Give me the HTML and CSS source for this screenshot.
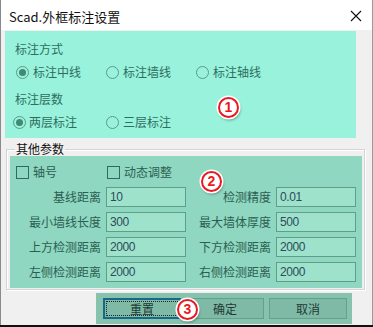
FILE: index.html
```html
<!DOCTYPE html>
<html lang="zh">
<head>
    <meta charset="UTF-8">
    <title>Scad.外框标注设置</title>
    <link rel="stylesheet" href="styles.css">
</head>
<body>
    <div class="window">
        <div class="titlebar">
            <span class="title">Scad.外框标注设置</span>
            <svg class="close" width="12" height="12" viewBox="0 0 12 12">
                <path d="M1 1 L11 11 M11 1 L1 11" stroke="#111" stroke-width="1.1" fill="none"/>
            </svg>
        </div>

        <div class="client">
            <div class="mode-panel">
                <div class="caption">标注方式</div>
                <div class="radio-row">
                    <label class="radio checked"><span class="ring"></span>标注中线</label>
                    <label class="radio"><span class="ring"></span>标注墙线</label>
                    <label class="radio"><span class="ring"></span>标注轴线</label>
                </div>
                <div class="caption">标注层数</div>
                <div class="radio-row">
                    <label class="radio checked first-left"><span class="ring"></span>两层标注</label>
                    <label class="radio"><span class="ring"></span>三层标注</label>
                </div>
            </div>

            <fieldset class="group">
                <legend>其他参数</legend>
                <div class="group-fill">
                    <div class="check-row">
                        <label class="check"><span class="box"></span>轴号</label>
                        <label class="check"><span class="box"></span>动态调整</label>
                    </div>
                    <div class="param-grid">
                        <span class="param-label">基线距离</span><span class="field">10</span>
                        <span class="param-label">检测精度</span><span class="field">0.01</span>
                        <span class="param-label">最小墙线长度</span><span class="field">300</span>
                        <span class="param-label">最大墙体厚度</span><span class="field">500</span>
                        <span class="param-label">上方检测距离</span><span class="field">2000</span>
                        <span class="param-label">下方检测距离</span><span class="field">2000</span>
                        <span class="param-label">左侧检测距离</span><span class="field">2000</span>
                        <span class="param-label">右侧检测距离</span><span class="field">2000</span>
                    </div>
                </div>
            </fieldset>

            <div class="button-bar">
                <button class="btn default">重置</button>
                <button class="btn">确定</button>
                <button class="btn">取消</button>
            </div>

            <span class="badge badge-1">1</span>
            <span class="badge badge-2">2</span>
            <span class="badge badge-3">3</span>
        </div>
    </div>
</body>
</html>
```

FILE: styles.css
```css
body {
    margin: 0;
    background-color: #111;
    font-family: "Noto Sans CJK SC", "Liberation Sans", sans-serif;
    font-size: 12px;
}

.window {
    width: 371px;
    height: 325px;
    border-left: 1px solid #8a8a8a;
    border-right: 1px solid #9a9a9a;
    background-color: #f0f0f0;
}

.titlebar {
    height: 30px;
    background-color: white;
    display: flex;
    align-items: center;
    justify-content: space-between;
    padding: 0 10px 0 8px;
}

.title {
    font-size: 13px;
    color: #111;
    padding-top: 2px;
}

.close {
    margin-top: 2px;
}

.client {
    position: relative;
    height: 295px;
}

.mode-panel {
    margin: 1px 0 0 4px;
    width: 351px;
    height: 107px;
    padding-left: 10px;
    box-sizing: border-box;
    background-color: #99f2dc;
    color: #2d6e5c;
}

.caption {
    height: 16px;
    line-height: 16px;
    padding-top: 10px;
}

.radio-row {
    display: grid;
    grid-template-columns: 90px 90px 90px;
    height: 16px;
    margin: 7px 0 1px 1px;
}

.radio {
    display: flex;
    align-items: center;
    gap: 4px;
    line-height: 16px;
}

.radio.first-left {
    margin-left: -3px;
    gap: 3px;
}

.ring {
    width: 11px;
    height: 11px;
    border: 1px solid #5e9a88;
    border-radius: 50%;
    box-sizing: content-box;
    display: flex;
    align-items: center;
    justify-content: center;
}

.radio.checked .ring::after {
    content: "";
    width: 7px;
    height: 7px;
    border-radius: 50%;
    background-color: #3e8a75;
}

.group {
    margin: 4px 0 0 5px;
    width: 359px;
    box-sizing: border-box;
    padding: 0 2px 1px 3px;
    border: 1px solid #d4d4d4;
    box-shadow: inset 1px 1px 0 white, 1px 1px 0 white;
    min-width: 0;
}

.group legend {
    padding: 0 1px;
    margin-left: 5px;
    line-height: 14px;
    color: #111;
}

.group-fill {
    background-color: #8fd7c0;
    padding: 9px 0 6px;
    color: #2b5e52;
}

.check-row {
    display: grid;
    grid-template-columns: 91px 91px;
    padding-left: 6px;
    height: 14px;
}

.check {
    display: flex;
    align-items: center;
    gap: 4px;
    line-height: 14px;
}

.box {
    width: 11px;
    height: 11px;
    border: 1px solid #2e6b5c;
}

.param-grid {
    display: grid;
    grid-template-columns: 96px 80px 90px 80px;
    grid-auto-rows: 20px;
    row-gap: 5px;
    margin-top: 8px;
}

.param-label {
    text-align: right;
    padding-right: 5px;
    line-height: 20px;
}

.field {
    box-sizing: border-box;
    border: 1px solid #5f9e89;
    background-color: #9ee2cb;
    padding-left: 3px;
    line-height: 18px;
    font-family: "Liberation Sans", sans-serif;
    font-size: 12px;
    letter-spacing: -0.4px;
    color: #2c4c5c;
}

.button-bar {
    margin: 3px 0 0 95px;
    width: 256px;
    height: 31px;
    box-sizing: border-box;
    padding: 5px 0 0 7px;
    background-color: #87c2ae;
    display: flex;
    gap: 5px;
    align-items: flex-start;
}

.btn {
    width: 78px;
    height: 21px;
    border: 1px solid #65a08c;
    background-color: #7fbaa6;
    font-family: "Noto Sans CJK SC", sans-serif;
    font-size: 12px;
    color: #1e3a34;
    padding: 0;
}

.btn.default {
    border: 2px solid #17698a;
    outline: 1px dotted #223;
    outline-offset: -4px;
}

.badge {
    position: absolute;
    width: 17px;
    height: 17px;
    border: 2px solid #ea1820;
    border-radius: 50%;
    background-color: white;
    color: #ea1820;
    font-family: "Liberation Sans", sans-serif;
    font-weight: bold;
    font-size: 14px;
    line-height: 17px;
    text-align: center;
    box-shadow: 0 0 0 1.5px white, 1px 2px 3px rgba(0, 0, 0, 0.45);
}

.badge-1 {
    left: 217px;
    top: 66px;
}

.badge-2 {
    left: 200px;
    top: 140px;
}

.badge-3 {
    left: 176px;
    top: 268px;
}
```
